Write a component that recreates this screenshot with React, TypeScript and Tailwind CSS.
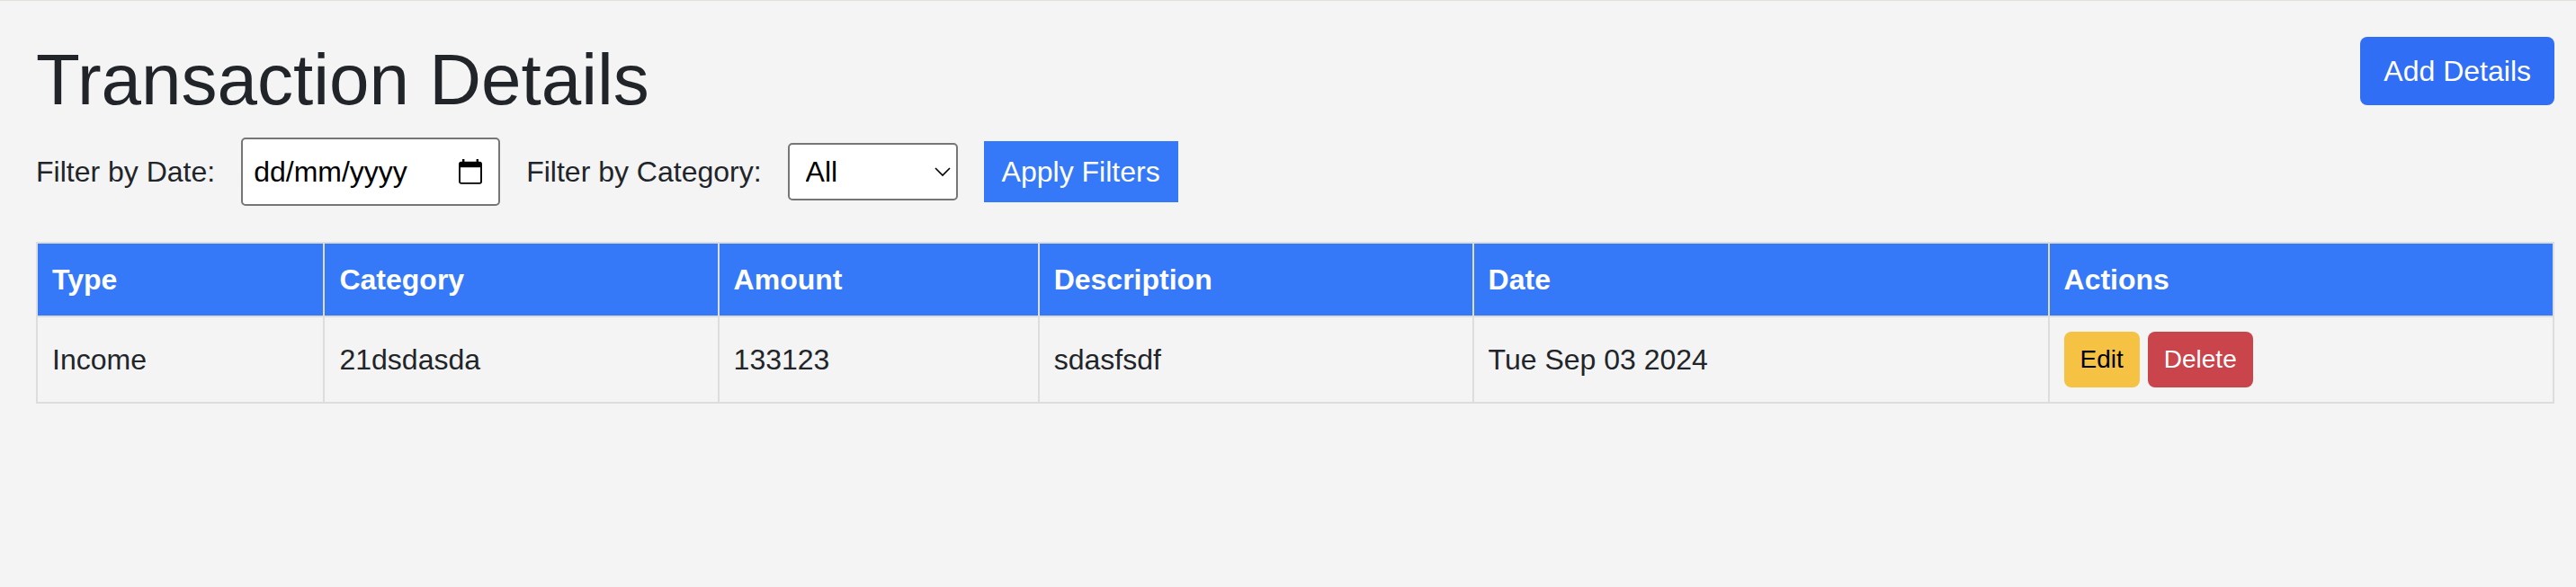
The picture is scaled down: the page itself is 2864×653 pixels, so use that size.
import React, { useState } from "react";

type Transaction = {
  id: number;
  type: string;
  category: string;
  amount: number;
  description: string;
  date: string;
};

const transactions: Transaction[] = [
  { id: 1, type: "Income", category: "21dsdasda", amount: 133123, description: "sdasfsdf", date: "Tue Sep 03 2024" },
];

const columns = ["Type", "Category", "Amount", "Description", "Date", "Actions"];

function CalendarIcon() {
  return (
    <svg width="26" height="28" viewBox="0 0 26 28" fill="none" aria-hidden="true">
      <path d="M5.2 0v4M20.8 0v4" stroke="#000" strokeWidth="2.4" />
      <rect x="1" y="3.7" width="24" height="23.2" rx="1.8" stroke="#000" strokeWidth="1.9" />
      <path d="M1 3.4h24v5.8H1z" fill="#000" />
    </svg>
  );
}

function Cell({ children }: { children: React.ReactNode }) {
  return <td className="border-2 border-[#dddddd] p-4">{children}</td>;
}

export default function App() {
  const [date, setDate] = useState("");
  const [category, setCategory] = useState("all");

  return (
    <main className="min-h-screen border-t border-[#dde3d8] bg-[#f4f4f4] pt-10 pr-6 pb-10 pl-10 font-['Liberation_Sans',Arial,sans-serif] text-[32px] leading-[48px] text-[#212529]">
      <header className="mb-4 flex items-start justify-between">
        <h1 className="text-[80px] leading-[96px]">Transaction Details</h1>
        <button type="button" className="rounded-lg bg-[#306ef5] px-[26px] py-[14px] text-white">
          Add Details
        </button>
      </header>

      <form className="mb-10 flex items-center gap-[29px]" onSubmit={(e) => e.preventDefault()}>
        <label htmlFor="date">Filter by Date:</label>
        <div className="flex h-[76px] w-72 items-center justify-between rounded-[5px] border-2 border-[#767676] bg-white pr-[18px] pl-3 text-black">
          <input
            id="date"
            type="text"
            placeholder="dd/mm/yyyy"
            value={date}
            onChange={(e) => setDate(e.target.value)}
            className="w-48 bg-transparent outline-none placeholder:text-black"
          />
          <button type="button" aria-label="Open calendar">
            <CalendarIcon />
          </button>
        </div>
        <label htmlFor="category">Filter by Category:</label>
        <div className="relative">
          <select
            id="category"
            value={category}
            onChange={(e) => setCategory(e.target.value)}
            className="block h-16 w-[189px] appearance-none rounded-[5px] border-2 border-[#767676] bg-white px-[18px] text-black"
          >
            <option value="all">All</option>
            <option value="21dsdasda">21dsdasda</option>
          </select>
          <svg
            className="pointer-events-none absolute top-[27px] right-2"
            width="18"
            height="11"
            viewBox="0 0 18 11"
            fill="none"
            aria-hidden="true"
          >
            <path d="M1 1l8 8L17 1" stroke="#000" strokeWidth="1.6" />
          </svg>
        </div>
        <button type="submit" className="bg-[#3579f8] px-5 py-[10px] text-white">
          Apply Filters
        </button>
      </form>

      <table className="w-full border-collapse text-left">
        <thead>
          <tr className="bg-[#3579f8] text-white">
            {columns.map((name) => (
              <th key={name} scope="col" className="border-2 border-[#dddddd] p-4 font-bold">
                {name}
              </th>
            ))}
          </tr>
        </thead>
        <tbody>
          {transactions.map((t) => (
            <tr key={t.id}>
              <Cell>{t.type}</Cell>
              <Cell>{t.category}</Cell>
              <Cell>{t.amount}</Cell>
              <Cell>{t.description}</Cell>
              <Cell>{t.date}</Cell>
              <Cell>
                <div className="flex gap-[9px] text-[28px] leading-[42px]">
                  <button type="button" className="rounded-lg bg-[#f6c244] px-[18px] py-[10px] text-black">
                    Edit
                  </button>
                  <button type="button" className="rounded-lg bg-[#ca444b] px-[18px] py-[10px] text-white">
                    Delete
                  </button>
                </div>
              </Cell>
            </tr>
          ))}
        </tbody>
      </table>
    </main>
  );
}
